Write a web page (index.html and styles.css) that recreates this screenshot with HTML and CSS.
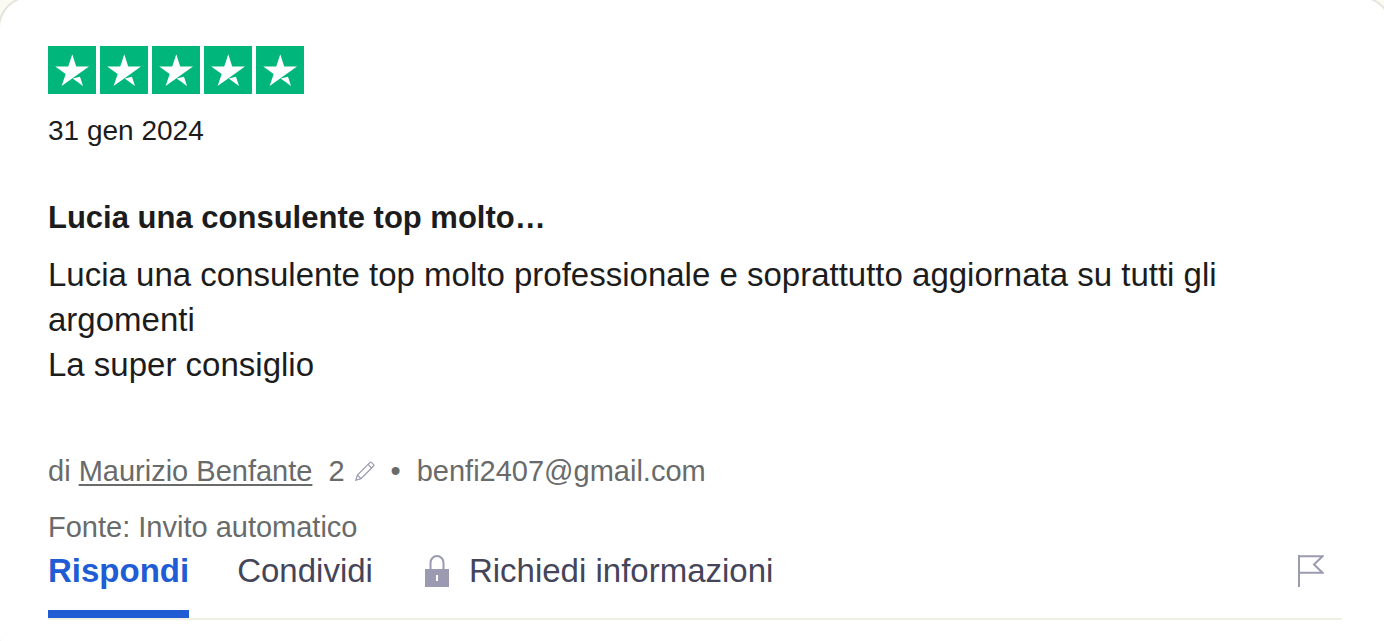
FILE: index.html
```
<!DOCTYPE html>
<html lang="it">
<head>
    <meta charset="UTF-8">
    <meta name="viewport" content="width=device-width, initial-scale=1.0">
    <title>Recensione</title>
    <link rel="stylesheet" href="styles.css">
</head>
<body>
    <svg class="symbols" aria-hidden="true">
        <symbol id="star" viewBox="0 0 48 48">
            <path class="star-box" d="M0 0h48v48H0z"/>
            <path class="star-shape" d="M24.300 8.200l3.900 12.400H41L13.600 40l4.100-12.100L7.200 20.600h13zM24.700 32.500l7.300-1.800 3 9.300z"/>
        </symbol>
    </svg>
    <article class="card">
        <div class="stars" role="img" aria-label="5 stelle su 5">
            <svg class="star"><use href="#star"/></svg>
            <svg class="star"><use href="#star"/></svg>
            <svg class="star"><use href="#star"/></svg>
            <svg class="star"><use href="#star"/></svg>
            <svg class="star"><use href="#star"/></svg>
        </div>
        <time class="date" datetime="2024-01-31">31 gen 2024</time>
        <h1 class="title">Lucia una consulente top molto…</h1>
        <p class="text">Lucia una consulente top molto professionale e soprattutto aggiornata su tutti gli argomenti<br>La super consiglio</p>
        <div class="author">
            <span>di <a class="name" href="#">Maurizio Benfante</a></span>
            <span class="count">2
                <svg class="pencil" viewBox="0 0 20 20" aria-hidden="true">
                    <path d="M.8 19.200l1.600-5.200L15 1.400a1 1 0 0 1 1.400 0L18.600 3.600a1 1 0 0 1 0 1.400L6 17.600zM2.400 14L6 17.600M13 3.400L16.600 7"/>
                </svg>
            </span>
            <span>•</span>
            <span>benfi2407@gmail.com</span>
        </div>
        <div class="source">Fonte: Invito automatico</div>
        <div class="actions">
            <button class="action active" type="button">Rispondi</button>
            <button class="action" type="button">Condividi</button>
            <button class="action" type="button">
                <svg class="lock" viewBox="0 0 24 32" aria-hidden="true">
                    <path class="shackle" d="M5.500 15V8a6.500 7 0 0 1 13 0V15"/>
                    <path class="lock-body" fill-rule="evenodd" d="M0 14h24v18H0zM11 20v6h2v-6z"/>
                </svg>
                Richiedi informazioni
            </button>
            <button class="action flag" type="button" aria-label="Segnala">
                <svg class="flag-icon" viewBox="0 0 26 32" aria-hidden="true">
                    <path class="pole" d="M1 0v32"/>
                    <path d="M1 1.200h23.500L16 9.500l8.500 8.300H1"/>
                </svg>
            </button>
        </div>
    </article>
</body>
</html>
```
FILE: styles.css
```
body {
    font-family: "Helvetica Neue", Helvetica, "Liberation Sans", Arial, sans-serif;
    margin: 0;
    background-color: #fcfbf3;
    color: #1c1c1c;
    overflow: hidden;
}
.symbols {
    position: absolute;
    width: 0;
    height: 0;
}
/* the card runs slightly past the top and right of the window */
.card {
    box-sizing: border-box;
    min-height: calc(100vh + 32px);
    margin: -4px -8px 0 -2px;
    padding: 48px 48px 32px;
    background: white;
    border: 2px solid #e5e5dd;
    border-radius: 32px;
}
.stars {
    display: flex;
    gap: 4px;
}
.star {
    width: 48px;
    height: 48px;
}
.star-box {
    fill: #00b67a;
}
.star-shape {
    fill: white;
}
.date {
    display: block;
    margin-top: 17px;
    font-size: 28px;
    line-height: 40px;
}
.title {
    margin: 44px 0 12px;
    font-size: 31px;
    line-height: 45px;
}
.text {
    margin: 0;
    font-size: 33px;
    line-height: 45px;
}
.author,
.source {
    color: #696a6a;
    font-size: 29px;
    line-height: 40px;
}
.author {
    display: flex;
    gap: 16px;
    margin-top: 64px;
}
.name {
    color: inherit;
    text-decoration-thickness: 2px;
    text-underline-offset: 3px;
}
.count {
    display: flex;
    align-items: center;
    gap: 10px;
}
.pencil {
    width: 20px;
    height: 20px;
    fill: none;
    stroke: #9a9ab0;
    stroke-width: 1.200;
}
.source {
    margin-top: 16px;
}
.actions {
    display: flex;
    align-items: flex-start;
    gap: 48px;
    border-bottom: 2px solid #f0f0e5;
}
.action {
    display: flex;
    align-items: center;
    height: 71px;
    padding: 0 0 16px;
    background: none;
    border: 0;
    border-bottom: 8px solid transparent;
    color: #45455a;
    font: inherit;
    font-size: 33px;
    line-height: 40px;
    cursor: pointer;
}
.active {
    color: #205cd4;
    border-bottom-color: #205cd4;
    font-weight: bold;
}
.lock {
    width: 24px;
    height: 32px;
    margin: 0 20px 0 4px;
}
.shackle {
    fill: none;
    stroke: #9a9ab0;
    stroke-width: 2;
}
.lock-body {
    fill: #9a9ab0;
}
.flag {
    margin: 0 18px 0 auto;
}
.flag-icon {
    width: 26px;
    height: 32px;
    fill: none;
    stroke: #9a9ab0;
    stroke-width: 2;
}
```
